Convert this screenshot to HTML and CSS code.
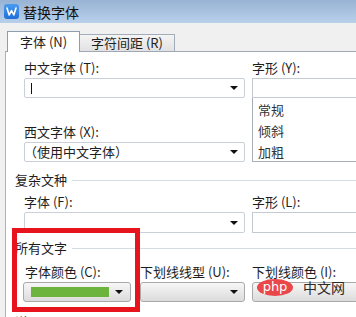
FILE: index.html
```html
<!DOCTYPE html>
<html lang="zh-CN">
<head>
<meta charset="utf-8">
<title>替换字体</title>
<link rel="stylesheet" href="styles.css">
</head>
<body>
<div class="window">
  <div class="titlebar">
    <svg class="app-icon" width="15" height="15" viewBox="0 0 15 15">
      <defs>
        <linearGradient id="ig" x1="0" y1="0" x2="0" y2="1">
          <stop offset="0" stop-color="#4a9bf0"/>
          <stop offset="1" stop-color="#1f6fd8"/>
        </linearGradient>
      </defs>
      <rect x="0" y="0" width="15" height="15" rx="3" fill="url(#ig)"/>
      <polyline points="3,4 5.2,11 7.5,6.5 9.8,11 12,4" fill="none" stroke="#fff" stroke-width="1.6" stroke-linejoin="round" stroke-linecap="round"/>
    </svg>
    <span class="title">替换字体</span>
  </div>

  <div class="tabstrip">
    <div class="tab active">字体 (N)</div>
    <div class="tab">字符间距 (R)</div>
  </div>

  <div class="pane">
    <div class="group1">
      <div class="col-left">
        <div class="label">中文字体 (T):</div>
        <div class="combo white"><span class="caret"></span><span class="arrow"></span></div>
        <div class="label second">西文字体 (X):</div>
        <div class="combo white"><span class="value">（使用中文字体）</span><span class="arrow"></span></div>
      </div>
      <div class="col-right">
        <div class="label">字形 (Y):</div>
        <div class="textbox"></div>
        <div class="listbox">
          <div class="item">常规</div>
          <div class="item">倾斜</div>
          <div class="item">加粗</div>
        </div>
      </div>
    </div>

    <div class="group-header first"><span>复杂文种</span><i class="rule"></i></div>
    <div class="group2">
      <div class="col-left">
        <div class="label">字体 (F):</div>
        <div class="combo white tall"><span></span><span class="arrow"></span></div>
      </div>
      <div class="col-right">
        <div class="label">字形 (L):</div>
        <div class="textbox tall"></div>
      </div>
    </div>

    <div class="group-header second"><span>所有文字</span><i class="rule"></i></div>
    <div class="group3">
      <div class="c1">
        <div class="label">字体颜色 (C):</div>
        <div class="combo button"><span class="swatch"></span><span class="arrow"></span></div>
      </div>
      <div class="c2">
        <div class="label">下划线线型 (U):</div>
        <div class="combo button"><span></span><span class="arrow"></span></div>
      </div>
      <div class="c3">
        <div class="label">下划线颜色 (I):</div>
        <div class="combo button"><span></span></div>
      </div>
    </div>

    <div class="group-header third"><span>说明</span><i class="rule"></i></div>
  </div>

  <div class="highlight"></div>
  <div class="watermark"><span class="php">php</span><span class="cn">中文网</span></div>
</div>
</body>
</html>
```

FILE: styles.css
```css
html, body {
  margin: 0;
  padding: 0;
}
body {
  width: 356px;
  height: 317px;
  overflow: hidden;
  background: #f0f0f0;
  font-family: "Noto Sans CJK SC", "Noto Sans", sans-serif;
  font-size: 13px;
  color: #1e1e1e;
}
.window {
  position: relative;
  width: 356px;
  height: 317px;
  overflow: hidden;
}
.titlebar {
  height: 23px;
  display: flex;
  align-items: center;
  padding-left: 4px;
  background: linear-gradient(#98b3d3, #b9d0ea);
  box-sizing: border-box;
}
.app-icon {
  display: block;
  flex: none;
}
.title {
  margin-left: 4px;
  font-size: 14px;
  line-height: 16px;
  color: #111;
}
.tabstrip {
  height: 28px;
  display: flex;
  align-items: flex-end;
  padding-left: 7px;
  box-sizing: border-box;
}
.tab {
  box-sizing: border-box;
  height: 17px;
  padding: 0 11px;
  line-height: 15px;
  border: 1px solid #a3acb9;
  border-bottom: none;
  background: linear-gradient(#f4f4f4, #e2e2e2);
  font-size: 13px;
  white-space: nowrap;
  margin-left: -1px;
}
.tab.active {
  height: 21px;
  line-height: 20px;
  padding: 0 12px;
  background: #fff;
  border-color: #8f9cb0;
  margin-left: 0;
  margin-bottom: -1px;
  position: relative;
  z-index: 1;
  width: 73px;
}
.pane {
  margin-left: 5px;
  border-left: 1px solid #aab2be;
  border-top: 1px solid #a0a8b8;
  background: #fff;
  height: 300px;
  padding-top: 8px;
  box-sizing: border-box;
}
.label {
  height: 16px;
  line-height: 16px;
  font-size: 13px;
  white-space: nowrap;
}
.group1, .group2 {
  display: flex;
  padding-left: 18px;
  column-gap: 7px;
}
.col-left {
  width: 221px;
  flex: none;
}
.col-right {
  width: 120px;
  flex: none;
}
.label + .combo, .label + .textbox {
  margin-top: 2px;
}
.label.second {
  margin-top: 26px;
}
.combo {
  box-sizing: border-box;
  height: 20px;
  display: flex;
  align-items: center;
  justify-content: space-between;
  padding: 0 6px 0 1px;
}
.combo.tall {
  height: 21px;
}
.combo.white {
  background: #fff;
  border: 1px solid #c9d0da;
  border-radius: 2px;
}
.combo.button {
  background: linear-gradient(#f7f7f7, #dcdcdc);
  border: 1px solid #a9a9a9;
  border-radius: 3px;
  height: 20px;
}
.caret {
  width: 1px;
  height: 11px;
  background: #111;
  margin-left: 5px;
}
.value {
  font-size: 13px;
  line-height: 16px;
  margin-left: -2px;
}
.arrow {
  width: 0;
  height: 0;
  border-left: 4px solid transparent;
  border-right: 4px solid transparent;
  border-top: 4px solid #111;
}
.textbox {
  box-sizing: border-box;
  height: 20px;
  border: 1px solid #c4cad4;
  background: #fff;
}
.textbox.tall {
  height: 21px;
}
.listbox {
  box-sizing: border-box;
  height: 64px;
  border: 1px solid #a9adb5;
  border-top: none;
  padding-top: 1px;
  padding-left: 5px;
}
.item {
  height: 21px;
  line-height: 21px;
  font-size: 13px;
  color: #333;
}
.group-header {
  display: flex;
  align-items: center;
  padding-left: 9px;
  height: 16px;
  line-height: 16px;
  white-space: nowrap;
}
.group-header.first {
  margin-top: 10px;
}
.group-header.second {
  margin-top: 7px;
}
.group-header.third {
  margin-top: 12px;
}
.rule {
  flex: 1;
  height: 1px;
  background: #d3dbe3;
  margin-left: 5px;
}
.group2 {
  margin-top: 6px;
}
.group3 {
  margin-top: 8px;
  display: flex;
  padding-left: 17px;
}
.group3 .c1 {
  width: 108px;
  flex: none;
}
.group3 .c1 .label {
  padding-left: 2px;
}
.group3 .c2 {
  width: 105px;
  flex: none;
  margin-left: 9px;
}
.group3 .c3 {
  width: 120px;
  flex: none;
  margin-left: 7px;
}
.swatch {
  width: 78px;
  height: 10px;
  background: #6db43f;
  margin-left: 6px;
}
.c1 .combo {
  padding-right: 7px;
}
.highlight {
  position: absolute;
  left: 12px;
  top: 228px;
  width: 128px;
  height: 84px;
  box-sizing: border-box;
  border: 5px solid #e8141d;
}
.watermark {
  position: absolute;
  left: 257px;
  top: 279px;
  display: flex;
  align-items: center;
}
.php {
  width: 36px;
  height: 17px;
  border-radius: 50%;
  background: #e9474a;
  color: #fff;
  font-family: "DejaVu Sans", sans-serif;
  font-size: 13px;
  line-height: 15px;
  text-align: center;
}
.cn {
  margin-left: 10px;
  font-size: 14px;
  line-height: 17px;
  color: #2a2a2a;
}
```
